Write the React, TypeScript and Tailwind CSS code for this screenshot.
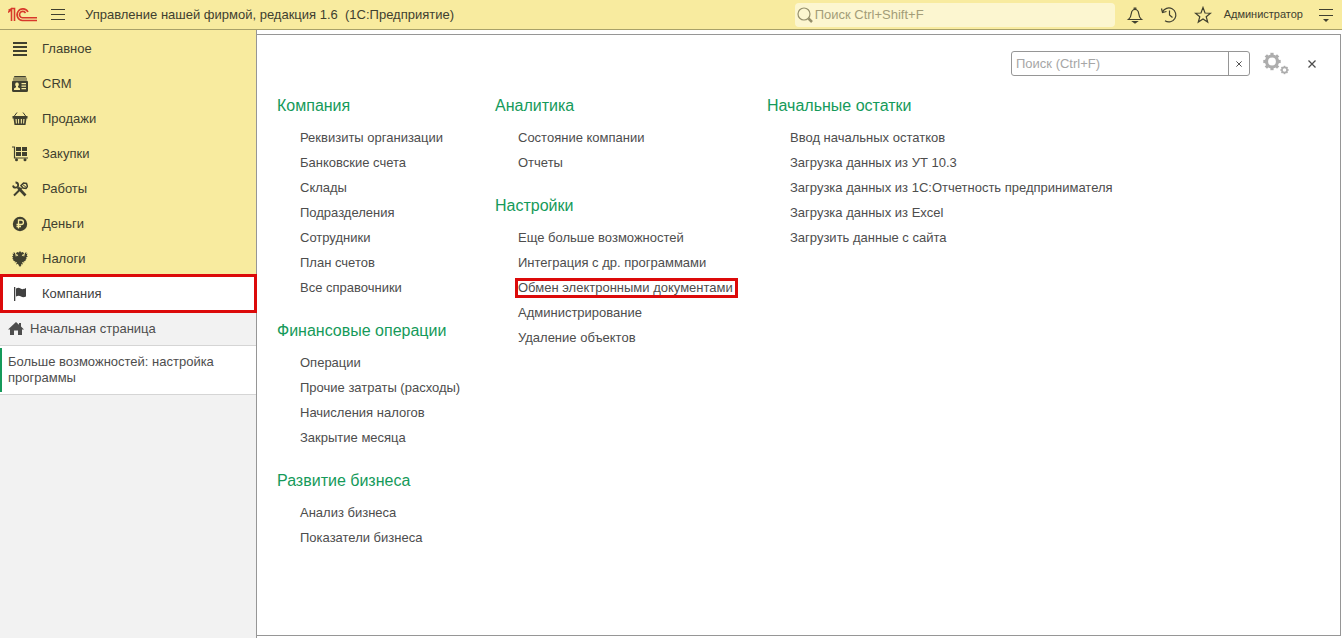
import type { ReactNode } from 'react';

type Section = { title: string; items: string[] };

const columns: { className: string; sections: Section[] }[] = [
  {
    className: 'w-[218px]',
    sections: [
      {
        title: 'Компания',
        items: ['Реквизиты организации', 'Банковские счета', 'Склады', 'Подразделения', 'Сотрудники', 'План счетов', 'Все справочники'],
      },
      { title: 'Финансовые операции', items: ['Операции', 'Прочие затраты (расходы)', 'Начисления налогов', 'Закрытие месяца'] },
      { title: 'Развитие бизнеса', items: ['Анализ бизнеса', 'Показатели бизнеса'] },
    ],
  },
  {
    className: 'w-[272px]',
    sections: [
      { title: 'Аналитика', items: ['Состояние компании', 'Отчеты'] },
      {
        title: 'Настройки',
        items: ['Еще больше возможностей', 'Интеграция с др. программами', 'Обмен электронными документами', 'Администрирование', 'Удаление объектов'],
      },
    ],
  },
  {
    className: 'w-[360px]',
    sections: [
      {
        title: 'Начальные остатки',
        items: ['Ввод начальных остатков', 'Загрузка данных из УТ 10.3', 'Загрузка данных из 1С:Отчетность предпринимателя', 'Загрузка данных из Excel', 'Загрузить данные с сайта'],
      },
    ],
  },
];

const highlighted = 'Обмен электронными документами';

function Glyph({ children }: { children: ReactNode }) {
  return (
    <svg viewBox="0 0 16 16" className="size-4 shrink-0" fill="currentColor" aria-hidden="true">
      {children}
    </svg>
  );
}

const nav: { label: string; icon: ReactNode }[] = [
  { label: 'Главное', icon: <path d="M1 1h14v2H1zM1 5h14v2H1zM1 9h14v2H1zM1 13h14v2H1z" /> },
  {
    label: 'CRM',
    icon: (
      <>
        <path d="M2.5 0h11l1 1.4h-13zM1 2.4h14v1.2H1z" />
        <path
          fillRule="evenodd"
          d="M1.5 4.500h13A1.5 1.5 0 0 1 16 6v8.500a1.5 1.5 0 0 1-1.5 1.5h-13A1.5 1.5 0 0 1 0 14.500V6a1.5 1.5 0 0 1 1.500-1.500zM5 6.500a1.800 2 0 0 0-1 3.700v1L2 12.500V14h6v-1.500l-2-1.300v-1A1.800 2 0 0 0 5 6.500zM9.500 7v1.200H14V7zm0 2.500v1.200H14V9.500zm0 2.500v1.200H14V12z"
        />
      </>
    ),
  },
  {
    label: 'Продажи',
    icon: (
      <>
        <path d="M5 1.500 2 5.500M11 1.500l3 4" fill="none" stroke="currentColor" />
        <path fillRule="evenodd" d="M.5 5h15v2.500h-1L13.500 14h-11l-1-6.500h-1zM3.500 8l.4 4.500h1L4.700 8zm2.500 0 .1 4.500h1V8zm2.800 0v4.500h1L10 8zm2.500 0-.2 4.500h1l.4-4.500z" />
      </>
    ),
  },
  {
    label: 'Закупки',
    icon: (
      <>
        <path d="M0 1h2.500v11H16" fill="none" stroke="currentColor" strokeWidth="1.2" />
        <path d="M4 1h5v4H4zM10 1h5v4h-5zM4 6h5v4H4zM10 6h5v4h-5z" />
        <circle cx="4.500" cy="13.800" r="1.500" />
        <circle cx="13" cy="13.800" r="1.500" />
      </>
    ),
  },
  {
    label: 'Работы',
    icon: (
      <>
        <path d="M3.500 1.500A2.600 2.600 0 1 1 1 4.500" fill="none" stroke="currentColor" strokeWidth="1.8" />
        <path d="m6 6.500 7.500 8" stroke="currentColor" strokeWidth="2.6" />
        <path d="M9.500 7 2 14.500" stroke="currentColor" strokeWidth="2" />
        <path d="M9 4.500 11.500 2l3 .5 1 3-1.500 2-3-.5z" fill="none" stroke="currentColor" strokeWidth="1.5" />
        <path d="m10 3 5 4" stroke="currentColor" />
      </>
    ),
  },
  {
    label: 'Деньги',
    icon: (
      <>
        <circle cx="8" cy="8" r="7.200" />
        <path d="M6.500 12.500V4h2.700a2.200 2.200 0 0 1 0 4.500H4.500M4.500 10.500H9" fill="none" stroke="#f8eb9f" strokeWidth="1.3" />
      </>
    ),
  },
  {
    label: 'Налоги',
    icon: (
      <path d="M8 0 6.800 1.500 5 1 3.800 3l1.700.5.800 1.700L4.500 4.500 4 6 3 2 1.500 1 2 3 .5 2.500 1.300 5 0 5l1.200 2L.2 7.500l1.600 1.700-.8.500 2.500.8-1 1 2.500-.5-1 2.500 2-.8L6.500 14 8 16l1.500-2-.5-1.300 2 .8-1-2.500 2.500.5-1-1 2.500-.8-.8-.5 1.600-1.700-1-.5L16 5h-1.300l.8-2.500-1.500.5.500-2L13 2l-1 4-.5-1.500-1.800.7.800-1.700 1.700-.5L11 1l-1.800.5z" />
    ),
  },
];

function HeaderButton({ label, children }: { label: string; children: ReactNode }) {
  return (
    <button type="button" aria-label={label} className="flex size-[18px] shrink-0 items-center justify-center">
      <svg viewBox="0 0 18 18" className="size-[18px]" fill="none" stroke="currentColor" strokeWidth="1.2" aria-hidden="true">
        {children}
      </svg>
    </button>
  );
}

function Gear({ cx, cy, r, w }: { cx: number; cy: number; r: number; w: number }) {
  return (
    <g transform={`translate(${cx} ${cy})`} stroke="#adadad" fill="none">
      <circle r={r} strokeWidth={w} />
      {[0, 45, 90, 135, 180, 225, 270, 315].map((a) => (
        <path key={a} d={`M0 ${-r}V${-r - w}`} strokeWidth={w} transform={`rotate(${a})`} />
      ))}
    </g>
  );
}

function TopBar() {
  return (
    <header className="flex h-[30px] shrink-0 items-center border-b border-[#a8a169] bg-[#f8eb9f] px-2 text-[#40402f]">
      <svg viewBox="0 0 30 16" className="h-4 w-[30px] shrink-0" fill="none" stroke="#d8392b" strokeWidth="1.6" aria-label="1С" role="img">
        <path d="M0 5.500 3.500 2.500V14M3 1.500h3.500V14M.5 3.500l4-2.300" />
        <path d="M20 5a5.800 5.800 0 1 0-5.500 8.500H29" />
        <path d="M17.500 6a3.200 3.200 0 1 0-3 4.800H29" />
      </svg>
      <button type="button" aria-label="Меню" className="ml-3 flex h-4 w-4 items-center justify-center">
        <svg viewBox="0 0 16 12" className="h-3 w-4" stroke="currentColor" aria-hidden="true">
          <path d="M1 .5h14M1 5.500h14M1 10.500h14" />
        </svg>
      </button>
      <h1 className="ml-[19px] whitespace-pre text-[13px]">Управление нашей фирмой, редакция 1.6  (1С:Предприятие)</h1>
      <label className="ml-auto flex h-6 w-80 items-center rounded-sm bg-[#fcf6d0] pl-0.5">
        <svg viewBox="0 0 16 16" className="size-4 shrink-0 text-[#96906c]" fill="none" stroke="currentColor" aria-hidden="true">
          <circle cx="7" cy="7" r="6" strokeWidth="1.2" />
          <path d="m11.500 11.500 3.500 3.500" strokeWidth="2.5" />
        </svg>
        <input aria-label="Поиск" placeholder="Поиск Ctrl+Shift+F" className="ml-0.5 min-w-0 flex-1 bg-transparent text-[13px] outline-none placeholder:text-[#a39d78]" />
      </label>
      <div className="ml-[11px] flex items-center gap-4">
        <HeaderButton label="Уведомления">
          <path d="M2.500 13.500h13c-2-1.500-2.500-3-2.800-6C12.400 5 11.300 3.500 9 3.500S5.600 5 5.300 7.500c-.3 3-.8 4.500-2.800 6zM8.200 3.500V2h1.600v1.500" />
          <path d="M7 15.500h4L9 17z" fill="currentColor" />
        </HeaderButton>
        <HeaderButton label="История">
          <path d="M2.500 6A7 7 0 1 1 5 14.800M1.500 2.500l1 4 4-1M9.500 4.500V9l3 2.500" />
        </HeaderButton>
        <HeaderButton label="Избранное">
          <path d="m9 1.500 2 5.500 5.500.2-4.300 3.500 1.500 5.400L9 13l-4.700 3.100 1.500-5.400L1.500 7.200 7 7z" />
        </HeaderButton>
      </div>
      <a href="#user" className="ml-3 text-[11px]">Администратор</a>
      <button type="button" aria-label="Параметры" className="ml-[15px] flex h-4 w-4 items-center justify-center">
        <svg viewBox="0 0 16 14" className="h-3.5 w-4" stroke="currentColor" aria-hidden="true">
          <path d="M1 1.500h14M1 7.500h14" />
          <path d="M5 11h6l-3 3z" fill="currentColor" stroke="none" />
        </svg>
      </button>
    </header>
  );
}

function Sidebar() {
  return (
    <aside className="flex w-[257px] shrink-0 flex-col border-r border-[#969696] bg-[#f2f2f2] text-[13px]">
      <nav className="bg-[#f8eb9f] pt-px text-[#40402f]">
        {nav.map((n) => (
          <a key={n.label} href="#section" className="flex h-[35px] items-center gap-3.5 pl-3">
            <Glyph>{n.icon}</Glyph>
            {n.label}
          </a>
        ))}
        <a href="#company" aria-current="page" className="-mr-px -mt-0.5 flex h-[39px] items-center gap-3.5 border-3 border-[#dc0a0a] bg-white pl-[9px] text-[#404040]">
          <Glyph>
            <path d="M2 1h1.300v14H2zM4 2.500c2-1 3-1 4.500 0s3 1 5.500-.5v8.500c-2 1-3.500 1-5 0s-3-1-5 0z" />
          </Glyph>
          Компания
        </a>
      </nav>
      <a href="#home" className="flex h-[33px] items-center gap-1.5 border-b border-[#d5d5d5] pl-2 text-[#4d4d4d]">
        <Glyph>
          <path d="M8 1 0 8.500h2V14h4V9.500h4V14h4V8.500h2L13 5.500V2h-2v1.700z" />
        </Glyph>
        Начальная страница
      </a>
      <div className="border-b border-[#d5d5d5] bg-white py-0.5">
        <a href="#settings" className="block border-l-2 border-[#159a5a] py-1.5 pl-1.5 pr-8 leading-4 text-[#4d4d4d]">
          Больше возможностей: настройка программы
        </a>
      </div>
    </aside>
  );
}

function Cross({ className }: { className: string }) {
  return (
    <svg viewBox="0 0 8 8" className={className} stroke="currentColor" strokeWidth="1.3" aria-hidden="true">
      <path d="m.5.5 7 7M7.500.5l-7 7" />
    </svg>
  );
}

export default function App() {
  return (
    <div className="flex min-h-screen flex-col bg-white font-['Liberation_Sans',Arial,sans-serif]">
      <TopBar />
      <div className="flex flex-1">
        <Sidebar />
        <main className="mb-0.5 mr-px mt-1 flex-1 border-y border-r border-[#969696] pl-5 text-[13px] text-[#4d4d4d]">
          <div className="flex items-center justify-end pr-[23px] pt-4">
            <div className="flex h-[25px] w-[239px] overflow-hidden rounded-[3px] border border-[#969696]">
              <input aria-label="Поиск по разделу" placeholder="Поиск (Ctrl+F)" className="min-w-0 flex-1 px-1 outline-none placeholder:text-[#a6a6a6]" />
              <button type="button" aria-label="Очистить" className="flex w-[21px] items-center justify-center border-l border-[#969696]">
                <Cross className="size-1.5" />
              </button>
            </div>
            <button type="button" aria-label="Настройка" className="ml-3">
              <svg viewBox="0 0 28 24" className="h-6 w-7" aria-hidden="true">
                <Gear cx={10} cy={9.5} r={5.5} w={3.2} />
                <Gear cx={22.5} cy={18} r={2.6} w={1.6} />
              </svg>
            </button>
            <button type="button" aria-label="Закрыть" className="ml-[17px] flex size-2.5 items-center justify-center">
              <Cross className="size-2" />
            </button>
          </div>
          <div className="flex pt-2.5">
            {columns.map((c) => (
              <div key={c.className} className={`${c.className} flex shrink-0 flex-col gap-[11px]`}>
                {c.sections.map((s) => (
                  <section key={s.title}>
                    <h2 className="flex h-[39px] items-center pt-px text-base text-[#159a5a]">{s.title}</h2>
                    <ul className="pl-5">
                      {s.items.map((item) => (
                        <li key={item} className="flex h-[25px] items-center">
                          <a
                            href="#item"
                            className={
                              item === highlighted
                                ? 'whitespace-nowrap border-3 border-[#dc0a0a] pr-0.5 leading-[14px]'
                                : 'whitespace-nowrap border-3 border-transparent pr-0.5 leading-[14px]'
                            }
                          >
                            {item}
                          </a>
                        </li>
                      ))}
                    </ul>
                  </section>
                ))}
              </div>
            ))}
          </div>
        </main>
      </div>
    </div>
  );
}
